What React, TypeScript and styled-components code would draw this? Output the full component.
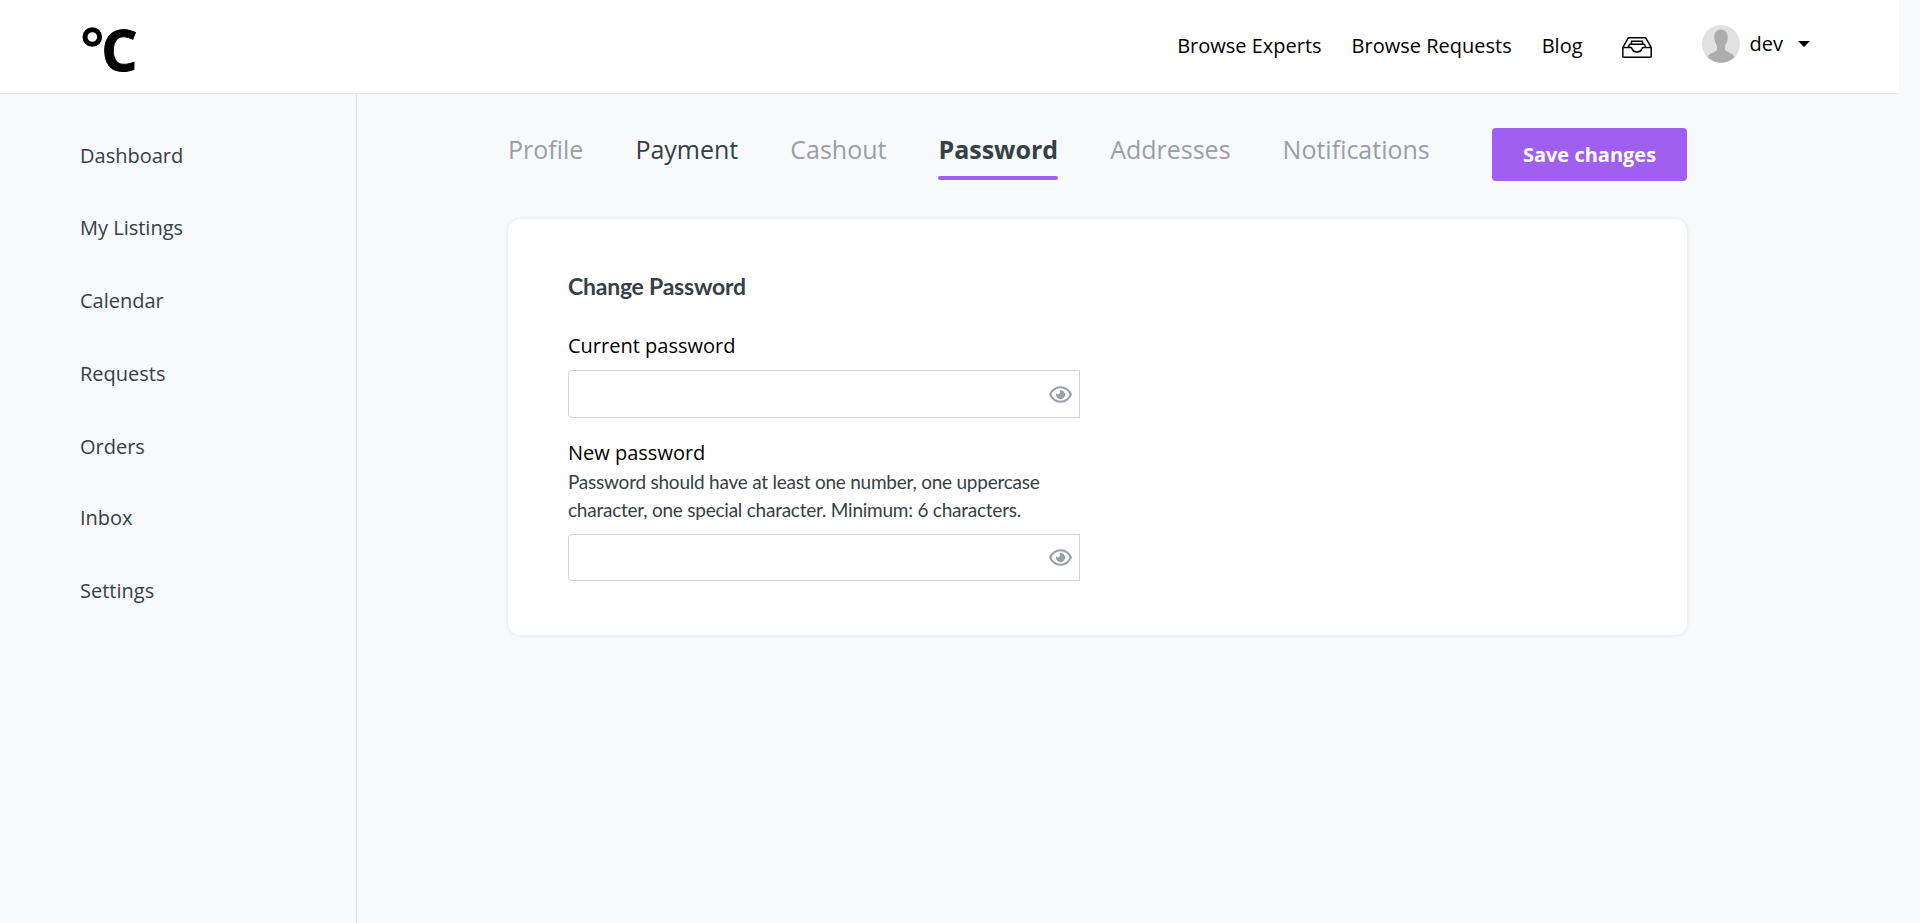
import React from "react";
import styled, { createGlobalStyle } from "styled-components";

const GlobalStyle = createGlobalStyle`
  * { box-sizing: border-box; }
  body { margin: 0; background: #f8f9fb; font-family: "Open Sans", sans-serif; font-size: 20px; color: #000; }
`;

const Page = styled.div`
  min-height: 923px;
  display: flex;
  flex-direction: column;
`;

const Header = styled.header`
  width: 1899px;
  height: 94px;
  padding: 0 89px 0 80px;
  display: flex;
  align-items: flex-start;
  justify-content: space-between;
  background: #fff;
  border-bottom: 1px solid #e7e8ea;
`;

const LogoMark = styled.svg`
  margin-top: 8px;
  display: block;
  font-family: "Open Sans", sans-serif;
  font-weight: 700;
`;

const HeaderNav = styled.nav`
  display: flex;
  align-items: flex-start;
`;

const HeaderLink = styled.a`
  margin: 31px 30px 0 0;
  line-height: 30px;
`;

const TrayIcon = styled.svg`
  display: block;
  margin: 36px 49px 0 8px;
`;

const UserMenu = styled.div`
  display: flex;
  align-items: center;
  margin-top: 25px;
  height: 38px;
  line-height: 30px;
`;

const Avatar = styled.svg`
  display: block;
  margin-right: 10px;
`;

const UserName = styled.span`
  margin-top: -1px;
`;

const Caret = styled.span`
  margin-left: 15px;
  border: 6px solid transparent;
  border-top-color: #000;
  border-bottom-width: 0;
`;

const Body = styled.div`
  flex: 1;
  display: flex;
`;

const Sidebar = styled.nav`
  width: 357px;
  padding: 47px 0 0 80px;
  display: flex;
  flex-direction: column;
  border-right: 1px solid #d9e1ea;
`;

const SidebarLink = styled.a<{ $gap: number }>`
  margin-bottom: ${(p) => p.$gap}px;
  line-height: 30px;
  color: #343f47;
`;

const Main = styled.main`
  width: 1179px;
  margin-left: 151px;
  padding-top: 34px;
`;

const Toolbar = styled.div`
  display: flex;
  justify-content: space-between;
  align-items: flex-start;
`;

const Tabs = styled.div`
  display: flex;
  gap: 52px;
`;

const Tab = styled.a<{ $tone?: "muted" | "dark" | "active" }>`
  height: 52px;
  padding-top: 4px;
  font-size: 25px;
  line-height: 34px;
  color: ${(p) => (p.$tone ? "#343f47" : "#9a9fa5")};
  font-weight: ${(p) => (p.$tone === "active" ? 700 : 400)};
  &::after {
    content: "";
    display: block;
    height: 4px;
    margin-top: 10px;
    border-radius: 2px;
    background: ${(p) => (p.$tone === "active" ? "#a15ff2" : "transparent")};
  }
`;

const SaveButton = styled.button`
  width: 195px;
  height: 53px;
  padding: 0;
  border: 0;
  border-radius: 4px;
  background: #a15ff2;
  color: #fff;
  font: 700 20px/30px "Open Sans", sans-serif;
`;

const Card = styled.section`
  margin: 38px 0 0;
  height: 416px;
  padding: 50px 60px;
  background: #fff;
  border-radius: 12px;
  box-shadow: 0 0 4px rgba(0, 0, 0, 0.1);
`;

const CardTitle = styled.h2`
  margin: 0 0 28px;
  font: 700 23px/34px Lato, sans-serif;
  letter-spacing: -0.23px;
  color: #343f47;
`;

const Field = styled.div`
  width: 512px;
  margin-bottom: 20px;
`;

const Label = styled.label`
  display: block;
  line-height: 30px;
`;

const Hint = styled.p`
  margin: 0 0 10px;
  font: 400 19px/28px Lato, sans-serif;
  letter-spacing: -0.235px;
  color: #343f47;
`;

const InputBox = styled.div<{ $height: number }>`
  height: ${(p) => p.$height}px;
  margin-top: 9px;
  padding-right: 7px;
  display: flex;
  align-items: center;
  border: 1px solid #ced4da;
  border-radius: 4px 0 0 4px;
`;

const Input = styled.input`
  flex: 1;
  height: 100%;
  border: 0;
  background: transparent;
  font: inherit;
  outline: none;
`;

const Eye = () => (
  <svg width="23" height="17" viewBox="0 0 23 17">
    <path d="M1.1 8.500C3.200 4 7 1.300 11.500 1.300S19.800 4 21.900 8.500C19.800 13 16 15.700 11.500 15.700S3.200 13 1.100 8.500Z" fill="none" stroke="#9a9fa5" strokeWidth="2" />
    <path d="M11.500 4A4.600 4.600 0 1 1 7.100 7.300A2.300 2.300 0 0 0 10.600 4.200A4.600 4.600 0 0 1 11.500 4Z" fill="#9a9fa5" />
  </svg>
);

const sidebarItems = [
  { label: "Dashboard", gap: 42 },
  { label: "My Listings", gap: 43 },
  { label: "Calendar", gap: 43 },
  { label: "Requests", gap: 43 },
  { label: "Orders", gap: 41 },
  { label: "Inbox", gap: 43 },
  { label: "Settings", gap: 0 },
];

export default function App() {
  return (
    <Page>
      <GlobalStyle />
      <Header>
        <LogoMark width="70" height="84">
          <circle cx="12.300" cy="29" r="7.300" fill="none" stroke="#000" strokeWidth="5" />
          <text x="21.300" y="63" fontSize="57" stroke="#000" strokeWidth="0.800">C</text>
        </LogoMark>
        <HeaderNav>
          <HeaderLink>Browse Experts</HeaderLink>
          <HeaderLink>Browse Requests</HeaderLink>
          <HeaderLink>Blog</HeaderLink>
          <TrayIcon width="32" height="23" fill="none" stroke="#000" strokeWidth="1.500" strokeLinejoin="round">
            <path d="M1.800 11.500L7.300 1.800H24.700L30.200 11.500V20.200Q30.200 21.200 29.200 21.200H2.800Q1.800 21.200 1.800 20.200ZM1.800 11.500H9.500Q10.800 11.500 11.200 13C12.500 17 19.500 17 20.800 13Q21.200 11.500 22.500 11.500H30.200" />
            <path d="M10.500 8V5.200H21.500V8M7.300 11.500L8.500 8.200H23.500L24.700 11.500" />
          </TrayIcon>
          <UserMenu>
            <Avatar width="38" height="38" viewBox="0 0 38 38">
              <circle cx="19" cy="19" r="19" fill="#e1e1e1" />
              <path d="M19 4.500C23.500 4.500 26 8 25.700 13C25.500 16 24.500 18.500 23 20.500V25C25 27.500 31 28 32.500 32A19 19 0 0 1 5.500 32C7 28 13 27.500 15 25V20.500C13.500 18.500 12.500 16 12.300 13C12 8 14.500 4.500 19 4.500Z" fill="#adadad" />
            </Avatar>
            <UserName>dev</UserName>
            <Caret />
          </UserMenu>
        </HeaderNav>
      </Header>
      <Body>
        <Sidebar>
          {sidebarItems.map((item) => (
            <SidebarLink key={item.label} $gap={item.gap}>{item.label}</SidebarLink>
          ))}
        </Sidebar>
        <Main>
          <Toolbar>
            <Tabs>
              <Tab>Profile</Tab>
              <Tab $tone="dark">Payment</Tab>
              <Tab>Cashout</Tab>
              <Tab $tone="active">Password</Tab>
              <Tab>Addresses</Tab>
              <Tab>Notifications</Tab>
            </Tabs>
            <SaveButton>Save changes</SaveButton>
          </Toolbar>
          <Card>
            <CardTitle>Change Password</CardTitle>
            <Field>
              <Label>Current password</Label>
              <InputBox $height={48}>
                <Input type="password" />
                <Eye />
              </InputBox>
            </Field>
            <Field>
              <Label>New password</Label>
              <Hint>Password should have at least one number, one uppercase character, one special character. Minimum: 6 characters.</Hint>
              <InputBox $height={47}>
                <Input type="password" />
                <Eye />
              </InputBox>
            </Field>
          </Card>
        </Main>
      </Body>
    </Page>
  );
}
